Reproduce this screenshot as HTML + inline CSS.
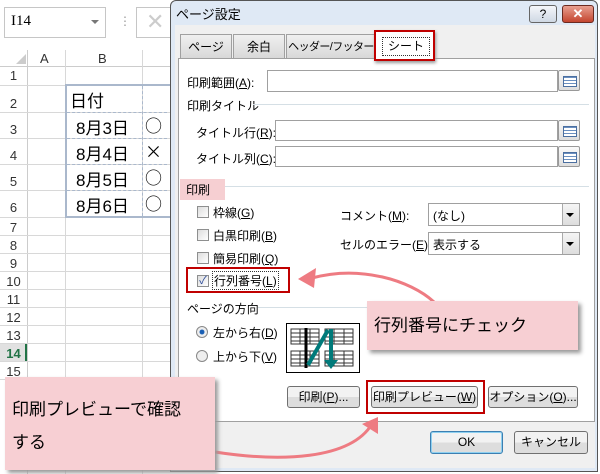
<!DOCTYPE html>
<html><head><meta charset="utf-8"><style>
*{margin:0;padding:0;box-sizing:border-box}
body{width:600px;height:474px;overflow:hidden;background:#fff;position:relative;font-family:"Liberation Sans","Noto Sans CJK JP",sans-serif;font-size:12px;color:#000}
.a{position:absolute}
.rh{position:absolute;left:0;width:27px;text-align:center;font-size:13px;color:#333}
.hl{position:absolute;left:0;width:170px;height:1px;background:#d8d8d8}
.vl{position:absolute;top:50px;width:1px;height:424px;background:#d8d8d8}
.inp{position:absolute;background:#fff;border:1px solid #a0a0a0}
.rb{position:absolute;width:22px;height:21px;border:1px solid #999;background:linear-gradient(#fafafa,#ddd);border-radius:2px}
.rb:after{content:"";position:absolute;left:4px;top:5px;width:12px;height:9px;background:repeating-linear-gradient(#6a8fc0 0 1px,#fff 1px 3px);border:1px solid #4b6fa0}
.cb{position:absolute;width:12px;height:12px;border:1px solid #8e8f8f;background:linear-gradient(135deg,#ddd,#fff)}
.btn{position:absolute;border:1px solid #707070;border-radius:3px;background:linear-gradient(#f2f2f2 50%,#dddddd 50%);text-align:center;font-size:12px;white-space:nowrap}
.tab{position:absolute;top:34px;height:24px;border:1px solid #a0a0a0;border-bottom:none;background:linear-gradient(#f0f0f0,#d8d8d8);text-align:center;line-height:24px;font-size:12px;white-space:nowrap;overflow:hidden}
.mk{font-family:"Noto Sans CJK JP",sans-serif;font-size:17px;position:absolute}
u{text-decoration:underline}
</style></head><body>
<!-- excel -->
<div class="a" style="left:4px;top:7px;width:102px;height:31px;border:1px solid #c6c6c6"></div>
<div class="a" style="left:11px;top:13px;font-size:15px;font-family:'Liberation Serif',serif">I14</div>
<div class="a" style="left:91px;top:20px;border:4px solid transparent;border-top:4px solid #777"></div>
<div class="a" style="left:119px;top:14px;color:#999;font-size:12px">⋮</div>
<div class="a" style="left:136px;top:7px;width:40px;height:31px;border:1px solid #c6c6c6"></div>
<div class="a" style="left:146px;top:9px;color:#ccc;font-size:22px">✕</div>
<div class="a" style="left:0;top:50px;width:170px;height:17px;background:#fff;border-bottom:1px solid #ccc"></div>
<div class="a" style="left:16px;top:54px;border:5px solid transparent;border-right-color:#ccc;border-bottom-color:#ccc"></div>
<div class="a" style="left:40px;top:51px;font-size:13px;color:#333">A</div>
<div class="a" style="left:98px;top:51px;font-size:13px;color:#333">B</div>
<div class="vl" style="left:27px;background:#ccc"></div><div class="vl" style="left:65px"></div><div class="vl" style="left:142px"></div>
<div class="hl" style="top:85px"></div><div class="hl" style="top:112px"></div><div class="hl" style="top:138px"></div><div class="hl" style="top:164px"></div><div class="hl" style="top:190px"></div><div class="hl" style="top:217px"></div><div class="hl" style="top:235px"></div><div class="hl" style="top:253px"></div><div class="hl" style="top:271px"></div><div class="hl" style="top:289px"></div><div class="hl" style="top:307px"></div><div class="hl" style="top:325px"></div><div class="hl" style="top:343px"></div><div class="hl" style="top:361px"></div><div class="hl" style="top:379px"></div>
<div class="rh" style="top:68px">1</div><div class="rh" style="top:96px">2</div><div class="rh" style="top:122px">3</div><div class="rh" style="top:148px">4</div><div class="rh" style="top:174px">5</div><div class="rh" style="top:200px">6</div><div class="rh" style="top:220px">7</div><div class="rh" style="top:238px">8</div><div class="rh" style="top:256px">9</div><div class="rh" style="top:274px">10</div><div class="rh" style="top:292px">11</div><div class="rh" style="top:310px">12</div><div class="rh" style="top:328px">13</div>
<div class="a" style="left:0;top:344px;width:27px;height:17px;background:#e1e1e1;border-right:2px solid #217346"></div>
<div class="rh" style="top:346px;color:#217346;font-weight:bold">14</div><div class="rh" style="top:364px">15</div>
<div class="a" style="left:65px;top:84px;width:110px;height:134px;border:2px solid #aab8cc"></div>
<div class="a" style="left:142px;top:86px;width:0;height:130px;border-left:1px dashed #aab8cc"></div>
<div class="a" style="left:67px;top:112px;width:100px;border-top:1px dashed #aab8cc"></div>
<div class="a" style="left:67px;top:138px;width:100px;border-top:1px dashed #aab8cc"></div>
<div class="a" style="left:67px;top:164px;width:100px;border-top:1px dashed #aab8cc"></div>
<div class="a" style="left:67px;top:190px;width:100px;border-top:1px dashed #aab8cc"></div>
<div class="a" style="left:70px;top:87px;font-size:17px">日付</div>
<div class="a" style="left:76px;top:114px;font-size:17px">8月3日</div><div class="mk" style="left:145px;top:112px">○</div>
<div class="a" style="left:76px;top:140px;font-size:17px">8月4日</div><div class="mk" style="left:145px;top:138px">×</div>
<div class="a" style="left:76px;top:166px;font-size:17px">8月5日</div><div class="mk" style="left:145px;top:164px">○</div>
<div class="a" style="left:76px;top:192px;font-size:17px">8月6日</div><div class="mk" style="left:145px;top:190px">○</div>
<!-- dialog -->
<div class="a" style="left:170px;top:0;width:428px;height:472px;background:#dfe9f5;border:1px solid #555;border-radius:6px 6px 0 0"></div>
<div class="a" style="left:176px;top:4px;font-size:13px">ページ設定</div>
<div class="a" style="left:529px;top:5px;width:28px;height:18px;border:1px solid #666;border-radius:3px;background:linear-gradient(#f5f7fa,#cfd8e4);text-align:center;font-size:12px;line-height:16px">?</div>
<div class="a" style="left:562px;top:5px;width:32px;height:18px;border:1px solid #6b2a20;border-radius:3px;background:linear-gradient(#e8a090,#c4452f);text-align:center;color:#fff;font-weight:bold;font-size:13px;line-height:16px">✕</div>
<div class="a" style="left:175px;top:25px;width:420px;height:443px;background:#f0f0f0"></div>
<div class="tab" style="left:180px;width:52px">ページ</div>
<div class="tab" style="left:233px;width:52px">余白</div>
<div class="tab" style="left:286px;width:90px;font-size:11px;letter-spacing:-0.6px">ヘッダー/フッター</div>
<div class="a" style="left:178px;top:58px;width:417px;height:364px;background:#fff;border:1px solid #a0a0a0"></div>
<div class="a" style="left:376px;top:31px;width:58px;height:28px;background:#fff"></div>
<div class="a" style="left:382px;top:37px;width:48px;height:19px;border:1px dotted #333;text-align:center;line-height:17px">シート</div>
<div class="a" style="left:374px;top:30px;width:61px;height:31px;border:2px solid #c00000;box-shadow:1px 2px 3px #999"></div>
<div class="a" style="left:187px;top:74px">印刷範囲(<u>A</u>):</div>
<div class="inp" style="left:267px;top:70px;width:291px;height:22px"></div><div class="rb" style="left:558px;top:70px"></div>
<div class="a" style="left:187px;top:97px">印刷タイトル</div>
<div class="a" style="left:253px;top:104px;width:336px;height:1px;background:#d5dfe5"></div>
<div class="a" style="left:196px;top:124px">タイトル行(<u>R</u>):</div>
<div class="inp" style="left:275px;top:120px;width:283px;height:21px"></div><div class="rb" style="left:558px;top:120px"></div>
<div class="a" style="left:196px;top:150px">タイトル列(<u>C</u>):</div>
<div class="inp" style="left:275px;top:146px;width:283px;height:21px"></div><div class="rb" style="left:558px;top:146px"></div>
<div class="a" style="left:180px;top:179px;width:45px;height:21px;background:#f6cfd2"></div>
<div class="a" style="left:186px;top:181px">印刷</div>
<div class="a" style="left:225px;top:186px;width:364px;height:1px;background:#d5dfe5"></div>
<div class="cb" style="left:197px;top:206px"></div><div class="a" style="left:213px;top:204px">枠線(<u>G</u>)</div>
<div class="cb" style="left:197px;top:229px"></div><div class="a" style="left:213px;top:227px">白黒印刷(<u>B</u>)</div>
<div class="cb" style="left:197px;top:252px"></div><div class="a" style="left:213px;top:250px">簡易印刷(<u>Q</u>)</div>
<div class="cb" style="left:197px;top:275px;font-size:11px;line-height:10px;color:#2a4a9a;text-align:center">✓</div>
<div class="a" style="left:212px;top:271px;border:1px dotted #333;padding:0 1px">行列番号(<u>L</u>)</div>
<div class="a" style="left:186px;top:267px;width:104px;height:26px;border:2px solid #c00000"></div>
<div class="a" style="left:340px;top:207px">コメント(<u>M</u>):</div>
<div class="inp" style="left:428px;top:203px;width:152px;height:23px;padding:3px 4px">(なし)</div>
<div class="a" style="left:340px;top:236px">セルのエラー(<u>E</u>):</div>
<div class="inp" style="left:428px;top:232px;width:152px;height:23px;padding:3px 4px">表示する</div>
<div class="a" style="left:562px;top:204px;width:17px;height:21px;background:linear-gradient(#f5f5f5,#ddd);border-left:1px solid #aaa"></div>
<div class="a" style="left:566px;top:213px;border:4px solid transparent;border-top:4px solid #000"></div>
<div class="a" style="left:562px;top:233px;width:17px;height:21px;background:linear-gradient(#f5f5f5,#ddd);border-left:1px solid #aaa"></div>
<div class="a" style="left:566px;top:242px;border:4px solid transparent;border-top:4px solid #000"></div>
<div class="a" style="left:187px;top:300px">ページの方向</div>
<div class="a" style="left:258px;top:307px;width:110px;height:1px;background:#d5dfe5"></div>
<div class="a" style="left:196px;top:326px;width:12px;height:12px;border-radius:50%;border:1px solid #888;background:radial-gradient(#1a5fb4 30%,#eee 40%)"></div>
<div class="a" style="left:213px;top:324px">左から右(<u>D</u>)</div>
<div class="a" style="left:196px;top:350px;width:12px;height:12px;border-radius:50%;border:1px solid #888;background:#eee"></div>
<div class="a" style="left:213px;top:348px">上から下(<u>V</u>)</div>
<svg class="a" style="left:286px;top:323px" width="74" height="50" viewBox="0 0 74 50">
<rect x="0.5" y="0.5" width="73" height="49" fill="#fff" stroke="#000"/>
<g fill="none" stroke="#333" stroke-width="1">
<rect x="5" y="6" width="28" height="15"/><rect x="39" y="6" width="28" height="15"/><rect x="5" y="28" width="28" height="15"/><rect x="39" y="28" width="28" height="15"/>
<path d="M5 10h28M5 14h28M5 18h28M39 10h28M39 14h28M39 18h28M5 32h28M5 36h28M5 40h28M39 32h28M39 36h28M39 40h28M14 6v15M24 6v15M48 6v15M58 6v15M14 28v15M24 28v15M48 28v15M58 28v15"/></g>
<path d="M20 5v40" stroke="#000" stroke-width="3"/>
<path d="M22 42L42 7" stroke="#007a7a" stroke-width="4"/>
<path d="M45 6v34" stroke="#007a7a" stroke-width="4"/>
<path d="M38 37l7 9 7-9z" fill="#007a7a"/>
</svg>
<div class="btn" style="left:287px;top:386px;width:73px;height:22px;line-height:20px">印刷(<u>P</u>)...</div>
<div class="btn" style="left:371px;top:386px;width:107px;height:22px;line-height:20px">印刷プレビュー(<u>W</u>)</div>
<div class="a" style="left:366px;top:380px;width:119px;height:34px;border:2px solid #c00000"></div>
<div class="btn" style="left:488px;top:386px;width:90px;height:22px;line-height:20px">オプション(<u>O</u>)...</div>
<div class="btn" style="left:430px;top:431px;width:73px;height:23px;line-height:21px;border-color:#3c7fb1;box-shadow:inset 0 0 0 1px #8ed0f0">OK</div>
<div class="btn" style="left:514px;top:431px;width:74px;height:23px;line-height:21px">キャンセル</div>
<!-- arrows -->
<svg class="a" style="left:0;top:0" width="600" height="474">
<path d="M434 302 C410 280,360 265,312 278" fill="none" stroke="#ee7b82" stroke-width="3"/>
<path d="M298 279 L316 268 L314 288 Z" fill="#ee7b82"/>
<path d="M215 452 C280 462,350 460,372 424" fill="none" stroke="#ee7b82" stroke-width="3"/>
<path d="M378 417 L362 424 L378 434 Z" fill="#ee7b82"/>
</svg>
<div class="a" style="left:367px;top:301px;width:211px;height:49px;background:#f7cfd3;box-shadow:3px 3px 4px #999;font-size:17px;line-height:49px;padding-left:7px">行列番号にチェック</div>
<div class="a" style="left:5px;top:377px;width:210px;height:93px;background:#f7cfd3;box-shadow:3px 3px 4px #999;font-size:17px;line-height:33px;padding:16px 0 0 7px">印刷プレビューで確認<br>する</div>
</body></html>
